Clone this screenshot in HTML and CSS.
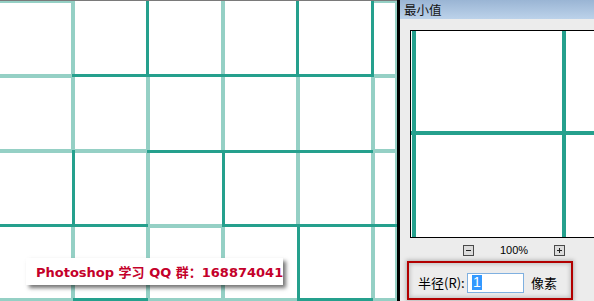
FILE: index.html
```html
<!DOCTYPE html>
<html>
<head>
<meta charset="utf-8">
<link rel="stylesheet" href="styles.css">
</head>
<body>
<div class="screen">
  <div class="canvas">
    <svg class="grid" width="397" height="301" viewBox="0 0 397 301">
      <g class="light">
        <rect x="0" y="1" width="73" height="2"/>
        <rect x="373" y="1" width="24" height="2"/>
        <rect x="0" y="74" width="72" height="4"/>
        <rect x="374" y="74" width="23" height="4"/>
        <rect x="0" y="149" width="147" height="4"/>
        <rect x="373" y="149" width="24" height="4"/>
        <rect x="148" y="224" width="74" height="4"/>
        <rect x="0" y="298" width="73" height="3"/>
        <rect x="148" y="298" width="149" height="3"/>
        <rect x="373" y="298" width="24" height="3"/>
        <rect x="71" y="0" width="4" height="150"/>
        <rect x="71" y="225" width="4" height="76"/>
        <rect x="146" y="75" width="4" height="226"/>
        <rect x="221" y="0" width="4" height="150"/>
        <rect x="221" y="225" width="4" height="76"/>
        <rect x="296" y="75" width="4" height="150"/>
        <rect x="371" y="75" width="4" height="226"/>
        <rect x="395" y="0" width="2" height="301"/>
      </g>
      <g class="dark">
        <rect x="72" y="74" width="302" height="3"/>
        <rect x="147" y="150" width="226" height="3"/>
        <rect x="0" y="224" width="148" height="3"/>
        <rect x="222" y="224" width="175" height="3"/>
        <rect x="73" y="298" width="75" height="3"/>
        <rect x="297" y="298" width="76" height="3"/>
        <rect x="72" y="150" width="3" height="75"/>
        <rect x="146" y="0" width="3" height="75"/>
        <rect x="222" y="150" width="3" height="75"/>
        <rect x="296" y="0" width="3" height="75"/>
        <rect x="297" y="225" width="3" height="76"/>
        <rect x="371" y="0" width="3" height="75"/>
      </g>
      <rect class="topline" x="0" y="0" width="397" height="1"/>
    </svg>
    <div class="watermark">Photoshop 学习 QQ 群：168874041</div>
  </div>
  <div class="dialog">
    <div class="titlebar">最小值</div>
    <div class="preview">
      <svg class="preview-lines" width="220" height="206" viewBox="0 0 220 206">
        <rect x="1" y="0" width="4" height="206"/>
        <rect x="151" y="0" width="4" height="206"/>
        <rect x="0" y="100" width="220" height="4"/>
      </svg>
    </div>
    <div class="zoom-row">
      <span class="zbtn"><svg width="9" height="9" viewBox="0 0 9 9"><rect x="2" y="4" width="5" height="1"/></svg></span>
      <span class="zpct">100%</span>
      <span class="zbtn"><svg width="9" height="9" viewBox="0 0 9 9"><rect x="2" y="4" width="5" height="1"/><rect x="4" y="2" width="1" height="5"/></svg></span>
    </div>
    <div class="radius-group">
      <span class="label">半径(R):</span>
      <span class="input"><span class="sel">1</span></span>
      <span class="unit">像素</span>
    </div>
  </div>
</div>
</body>
</html>
```

FILE: styles.css
```css
html, body {
  margin: 0;
  padding: 0;
  background: #ffffff;
}
.screen {
  display: flex;
  width: 594px;
  height: 301px;
  overflow: hidden;
}
.canvas {
  position: relative;
  width: 397px;
  height: 301px;
  flex: none;
  background: #ffffff;
}
.grid {
  display: block;
}
.light rect { fill: #95d0c5; }
.dark rect { fill: #25a08d; }
.topline { fill: #7a7a7a; }
.watermark {
  position: absolute;
  left: 26px;
  top: 258px;
  width: 257px;
  height: 27px;
  box-sizing: border-box;
  padding-left: 10px;
  background: #ffffff;
  box-shadow: 3px 3px 4px rgba(0, 0, 0, 0.55);
  font-family: "DejaVu Sans", "Noto Sans CJK SC", sans-serif;
  font-weight: bold;
  font-size: 13px;
  line-height: 29px;
  color: #c4002a;
  white-space: nowrap;
}
.dialog {
  flex: 1;
  height: 301px;
  overflow: hidden;
  background: #ececec;
  border-left: 3px solid transparent;
  border-image: linear-gradient(to right, #000 0 1px, #9c9c9c 1px 2px, #fbfbfb 2px 3px) 1;
  display: flex;
  flex-direction: column;
  font-family: "Noto Sans CJK SC", "Liberation Sans", sans-serif;
  color: #000;
}
.titlebar {
  height: 19px;
  flex: none;
  padding-left: 4px;
  background: linear-gradient(to bottom, #9ab5d4, #bcd2ea);
  font-size: 12.5px;
  line-height: 19px;
  color: #141414;
}
.preview {
  flex: none;
  margin-top: 11px;
  margin-left: 10px;
  width: 220px;
  height: 206px;
  background: #ffffff;
  border: 1px solid #000;
  border-right: none;
}
.preview-lines {
  display: block;
}
.preview-lines rect { fill: #25a08d; }
.zoom-row {
  flex: none;
  display: flex;
  align-items: center;
  margin-top: 7px;
  height: 11px;
  padding-left: 63px;
}
.zbtn {
  width: 11px;
  height: 11px;
  box-sizing: border-box;
  border: 1px solid #4a4a4a;
  background: #dcdcdc;
  display: flex;
  align-items: center;
  justify-content: center;
}
.zbtn svg { display: block; }
.zbtn rect { fill: #202020; }
.zpct {
  margin-left: 26px;
  margin-right: 26px;
  font-family: "Liberation Sans", sans-serif;
  font-size: 11px;
  line-height: 11px;
  width: 28px;
}
.radius-group {
  flex: none;
  margin-top: 5px;
  margin-left: 7px;
  width: 166px;
  height: 39px;
  box-sizing: border-box;
  border: 2px solid #b20000;
  box-shadow: 0 0 4px 1px rgba(0, 0, 0, 0.25), inset 0 0 4px 1px rgba(0, 0, 0, 0.2);
  display: flex;
  align-items: flex-start;
  padding-top: 10px;
  padding-left: 9px;
  font-size: 13px;
  line-height: 20px;
}
.label {
  width: 49px;
  flex: none;
  white-space: nowrap;
}
.input {
  width: 57px;
  height: 20px;
  box-sizing: border-box;
  border: 1px solid #7fb0e0;
  background: #fff;
  padding-left: 4px;
  padding-top: 1px;
  display: flex;
  align-items: flex-start;
}
.sel {
  background: #3399ff;
  color: #fff;
  height: 15px;
  line-height: 15px;
  padding: 0 1px;
  font-family: "Liberation Sans", sans-serif;
  font-size: 14px;
}
.unit {
  margin-left: 7px;
}
```
